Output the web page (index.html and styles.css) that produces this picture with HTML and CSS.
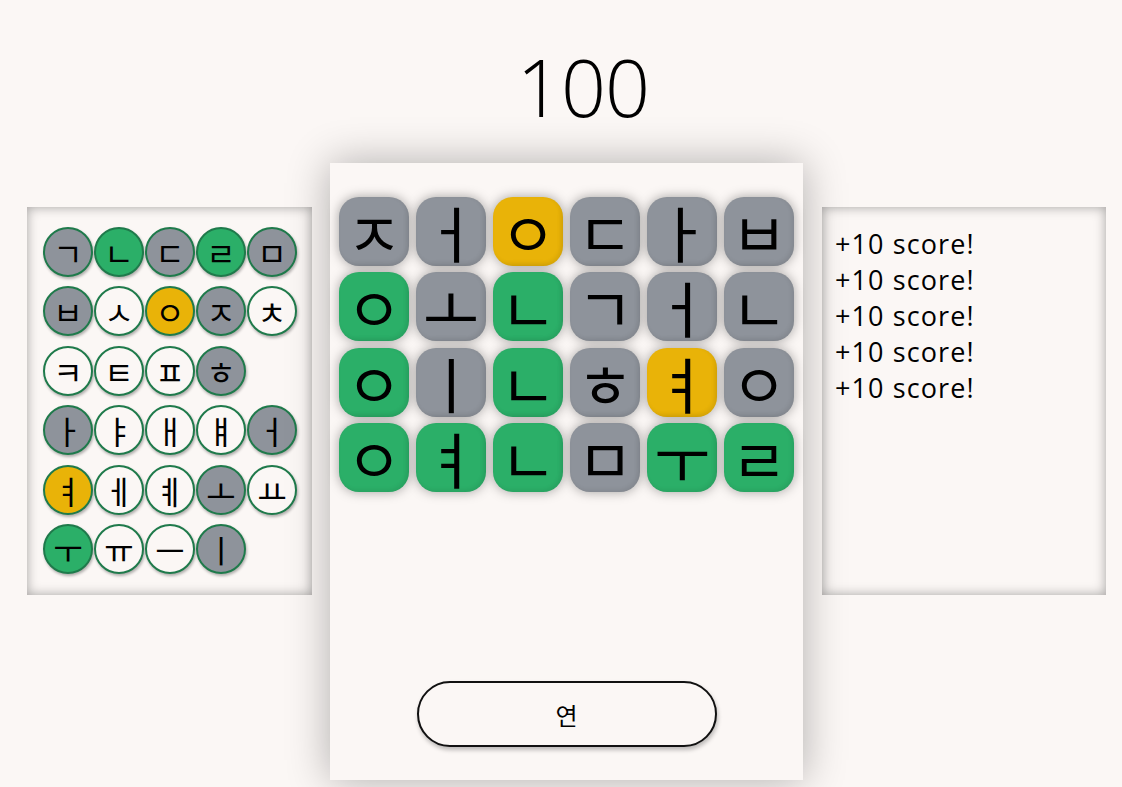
FILE: index.html
```html
<!DOCTYPE html>
<html lang="ko">
<head>
<meta charset="utf-8">
<title>Korean Wordle</title>
<link rel="stylesheet" href="styles.css">
</head>
<body>
<h1 class="score">100</h1>
<main class="layout">
  <section class="keyboard">
    <div class="key-row">
      <span class="key gray">ㄱ</span><span class="key green">ㄴ</span><span class="key gray">ㄷ</span><span class="key green">ㄹ</span><span class="key gray">ㅁ</span>
    </div>
    <div class="key-row">
      <span class="key gray">ㅂ</span><span class="key">ㅅ</span><span class="key yellow">ㅇ</span><span class="key gray">ㅈ</span><span class="key">ㅊ</span>
    </div>
    <div class="key-row">
      <span class="key">ㅋ</span><span class="key">ㅌ</span><span class="key">ㅍ</span><span class="key gray">ㅎ</span>
    </div>
    <div class="key-row">
      <span class="key gray">ㅏ</span><span class="key">ㅑ</span><span class="key">ㅐ</span><span class="key">ㅒ</span><span class="key gray">ㅓ</span>
    </div>
    <div class="key-row">
      <span class="key yellow">ㅕ</span><span class="key">ㅔ</span><span class="key">ㅖ</span><span class="key gray">ㅗ</span><span class="key">ㅛ</span>
    </div>
    <div class="key-row">
      <span class="key green">ㅜ</span><span class="key">ㅠ</span><span class="key">ㅡ</span><span class="key gray">ㅣ</span>
    </div>
  </section>

  <section class="board-panel">
    <div class="board">
      <span class="tile gray">ㅈ</span><span class="tile gray">ㅓ</span><span class="tile yellow">ㅇ</span><span class="tile gray">ㄷ</span><span class="tile gray">ㅏ</span><span class="tile gray">ㅂ</span>
      <span class="tile green">ㅇ</span><span class="tile gray">ㅗ</span><span class="tile green">ㄴ</span><span class="tile gray">ㄱ</span><span class="tile gray">ㅓ</span><span class="tile gray">ㄴ</span>
      <span class="tile green">ㅇ</span><span class="tile gray">ㅣ</span><span class="tile green">ㄴ</span><span class="tile gray">ㅎ</span><span class="tile yellow">ㅕ</span><span class="tile gray">ㅇ</span>
      <span class="tile green">ㅇ</span><span class="tile green">ㅕ</span><span class="tile green">ㄴ</span><span class="tile gray">ㅁ</span><span class="tile green">ㅜ</span><span class="tile green">ㄹ</span>
    </div>
    <button class="submit" type="button">연</button>
  </section>

  <section class="log">
    <p class="log-line">+10 score!</p>
    <p class="log-line">+10 score!</p>
    <p class="log-line">+10 score!</p>
    <p class="log-line">+10 score!</p>
    <p class="log-line">+10 score!</p>
  </section>
</main>
</body>
</html>
```

FILE: styles.css
```css
* { box-sizing: border-box; }

html, body {
  margin: 0;
  padding: 0;
  background: #fbf7f5;
  height: 787px;
  overflow: hidden;
}

body {
  font-family: "Open Sans", "Noto Sans CJK KR", sans-serif;
  color: #000;
}

.score {
  margin: 0;
  padding: 47px 0 0 44px;
  height: 163px;
  text-align: center;
  font-weight: 300;
  font-size: 79px;
  line-height: 1;
  letter-spacing: -1px;
  font-family: "Open Sans", sans-serif;
}

.layout {
  display: flex;
  align-items: flex-start;
  padding-left: 27px;
}

.keyboard {
  width: 285px;
  height: 388px;
  margin-top: 44px;
  padding: 20px 0 0 16px;
  background: #fbf7f5;
  box-shadow: inset 0 0 12px rgba(0, 0, 0, 0.35);
  display: flex;
  flex-direction: column;
  gap: 9.4px;
}

.key-row {
  display: flex;
  gap: 1px;
}

.key {
  width: 50px;
  height: 50px;
  border-radius: 50%;
  border: 2px solid #1f7a4b;
  background: #fbf7f5;
  display: flex;
  align-items: center;
  justify-content: center;
  font-family: "Noto Sans CJK KR", sans-serif;
  font-size: 32px;
  line-height: 1;
  box-shadow: 1px 2px 3px rgba(0, 0, 0, 0.3);
}

.gray { background: #8e939b; }
.green { background: #2baf68; }
.yellow { background: #e9b308; }

.board-panel {
  width: 473px;
  height: 617px;
  margin-left: 18px;
  background: #fbf7f5;
  box-shadow: 0 0 40px rgba(0, 0, 0, 0.3);
  padding: 34px 9px 0;
  display: flex;
  flex-direction: column;
  align-items: center;
  position: relative;
  z-index: 1;
}

.board {
  display: grid;
  grid-template-columns: repeat(6, 70px);
  grid-auto-rows: 69px;
  column-gap: 7px;
  row-gap: 6.3px;
}

.tile {
  border-radius: 20px;
  display: flex;
  align-items: center;
  justify-content: center;
  font-family: "Noto Sans CJK KR", sans-serif;
  font-size: 61px;
  line-height: 1;
  box-shadow: 0 0 12px rgba(0, 0, 0, 0.35), inset -2px -2px 4px rgba(0, 0, 0, 0.08);
}

.submit {
  margin-top: auto;
  margin-bottom: 33px;
  width: 300px;
  height: 66px;
  border-radius: 33px;
  border: 2px solid #111;
  background: #fbf7f5;
  font-family: "Noto Sans CJK KR", sans-serif;
  font-size: 24px;
  color: #000;
  box-shadow: 1px 3px 4px rgba(0, 0, 0, 0.25);
}

.log {
  width: 284px;
  height: 388px;
  margin-top: 44px;
  margin-left: 19px;
  padding: 19px 13px;
  background: #fbf7f5;
  box-shadow: inset 0 0 12px rgba(0, 0, 0, 0.35);
}

.log-line {
  margin: 0;
  font-size: 27px;
  line-height: 36px;
  letter-spacing: 1.1px;
}
```
